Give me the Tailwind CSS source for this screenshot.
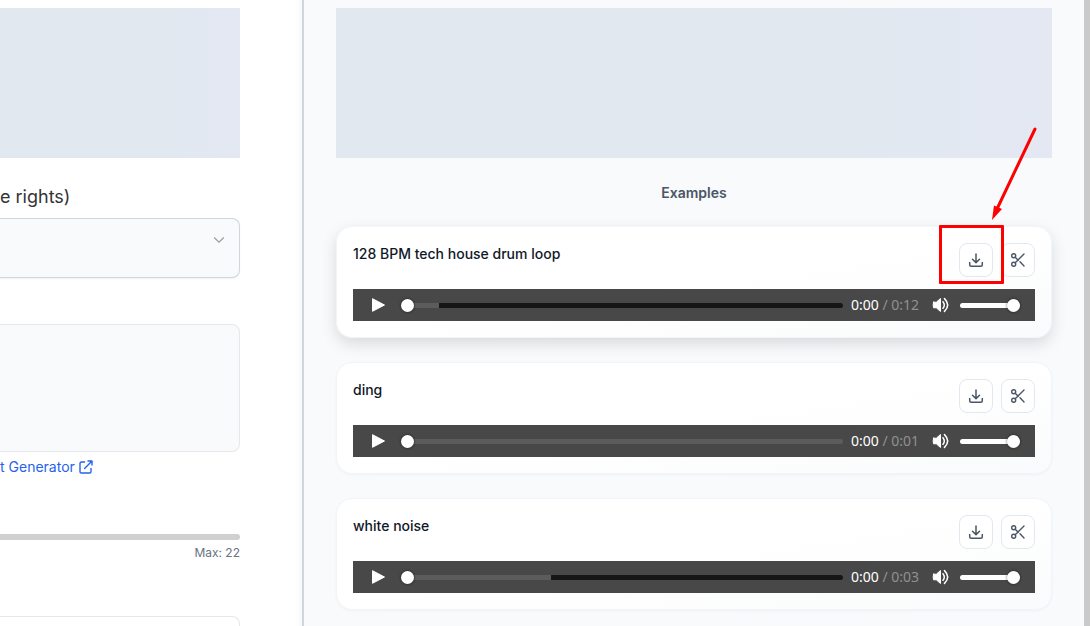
<!DOCTYPE html>
<html lang="en">

<head>
    <meta charset="UTF-8">
    <meta name="viewport" content="width=device-width, initial-scale=1.0">
    <title>Sound Generator</title>
    <script src="https://cdn.jsdelivr.net/npm/@tailwindcss/browser@4"></script>
</head>

<body class="flex h-screen overflow-hidden bg-white font-['Inter',sans-serif] text-sm text-gray-900">

    <!-- Settings -->
    <section class="w-[302px] shrink-0 pt-2 pr-[62px] shadow-[inset_-10px_0_8px_-10px_rgba(0,0,0,0.06)]">
        <div class="h-[150px] bg-linear-to-r from-[#e1e8ef] from-50% to-[#e3e8f2]"></div>

        <label for="model" class="mt-[25px] block text-lg leading-7 text-[#333]">e rights)</label>
        <div class="relative mt-[7px]">
            <select id="model" class="block h-[60px] w-full appearance-none rounded-r-lg border border-l-0 border-gray-300 bg-[#f9fafc] shadow-xs">
                <option></option>
            </select>
            <svg class="pointer-events-none absolute top-4 right-[15px] size-3" viewBox="0 0 12 12" fill="none" stroke="#999" stroke-width="1.1">
                <path d="M1.2 3.5 6 8.2l4.8-4.7" />
            </svg>
        </div>

        <textarea aria-label="Prompt" class="mt-[46px] block h-32 w-full resize-none rounded-r-lg border border-l-0 border-gray-200 bg-[#f9fafc]"></textarea>
        <a href="#" class="mt-[5px] flex items-center gap-1 leading-5 text-[#2563eb]">
            t Generator
            <svg class="size-3.5" viewBox="0 0 14 14" fill="none" stroke="currentColor" stroke-width="1.4" stroke-linecap="round" stroke-linejoin="round">
                <path d="M5.6 2H2.3A1.3 1.3 0 0 0 1 3.3v8.4A1.3 1.3 0 0 0 2.3 13h8.4a1.3 1.3 0 0 0 1.3-1.3V8.4M9 1h4v4M13 1 5.6 8.4" />
            </svg>
        </a>

        <input type="range" id="duration" min="0" max="22" value="0" class="mt-[57px] block h-1.5 w-full appearance-none rounded-r-full bg-[#d0d0d0] [&::-webkit-slider-thumb]:appearance-none">
        <label for="duration" class="mt-1 block text-right text-[12px] leading-[18px] text-gray-500">Max: 22</label>

        <input type="text" aria-label="Name" class="mt-[54px] block h-10 w-full rounded-r-lg border border-l-0 border-gray-200">
    </section>

    <!-- Results -->
    <main class="min-w-0 flex-1 overflow-hidden border-l-2 border-gray-300 bg-[#f9fafc] px-8 pt-2">
        <div class="h-[150px] bg-linear-to-r from-[#e1e8ef] from-50% to-[#e3e8f2]"></div>
        <h2 class="mt-[25px] text-center leading-5 font-semibold text-gray-600">Examples</h2>
        <div id="examples" class="mt-[23px] flex flex-col gap-6"></div>
    </main>

    <div class="w-1.5 shrink-0 bg-[#cacaca]"></div>

    <template id="annotation">
        <div class="pointer-events-none absolute -top-[18px] -left-5 h-[59px] w-[65px] rounded-[1px] border-3 border-[#f00]"></div>
        <svg class="pointer-events-none absolute -top-[118px] left-8 h-[98px] w-[46px]" viewBox="0 0 46 98" fill="#f00">
            <path d="M44 4 6 84" stroke="#f00" stroke-width="3" stroke-linecap="round" />
            <path d="M1 95 3 80.500 11 84Z" />
        </svg>
    </template>

    <script>
        const examples = [
            { title: "128 BPM tech house drum loop", length: "0:12", loaded: 8.6, marked: true },
            { title: "ding", length: "0:01", loaded: 100 },
            { title: "white noise", length: "0:03", loaded: 34 }
        ];

        const button = "flex size-[34px] items-center justify-center rounded-lg border border-slate-200 bg-white text-gray-600";
        const range = "block h-[5px] appearance-none rounded-full [&::-webkit-slider-thumb]:size-[13px] [&::-webkit-slider-thumb]:appearance-none [&::-webkit-slider-thumb]:rounded-full [&::-webkit-slider-thumb]:bg-white [&::-webkit-slider-thumb]:shadow-[0_0_3px_rgba(0,0,0,0.6)]";

        examples.forEach(item => {
            const card = document.createElement("article");
            const shadow = item.marked ? "shadow-[0_6px_16px_rgba(0,0,0,0.13)]" : "shadow-[0_1px_3px_rgba(0,0,0,0.04)]";
            card.className = `rounded-2xl border border-slate-100 bg-linear-to-br from-white from-50% to-[#fafbfc] p-4 ${shadow}`;
            card.innerHTML = `
                <div class="flex justify-between">
                    <h3 class="leading-[22px] font-medium">${item.title}</h3>
                    <div class="flex gap-2">
                        <div class="relative">
                            <button type="button" aria-label="Download" class="${button}">
                                <svg class="size-4" viewBox="0 0 16 16" fill="none" stroke="currentColor" stroke-width="1.5" stroke-linecap="round" stroke-linejoin="round">
                                    <path d="M8 2v8.500M4.500 7.200 8 10.600l3.500-3.400M1.700 10.500v2.200c0 .9.600 1.500 1.500 1.500h9.600c.9 0 1.500-.6 1.500-1.500v-2.200" />
                                </svg>
                            </button>
                            ${item.marked ? document.getElementById("annotation").innerHTML : ""}
                        </div>
                        <button type="button" aria-label="Trim" class="${button}">
                            <svg class="size-4" viewBox="0 0 16 16" fill="none" stroke="currentColor" stroke-width="1.400" stroke-linecap="round">
                                <circle cx="3.700" cy="3.800" r="2" />
                                <circle cx="3.700" cy="12.200" r="2" />
                                <path d="M14 2 5.200 10.700M5.200 5.300l3 2.900M10 9.800l4 4.200" />
                            </svg>
                        </button>
                    </div>
                </div>
                <div class="mt-3 flex h-8 items-center bg-[#484848] pr-[15px] pl-[19px]">
                    <button type="button" aria-label="Play" class="mr-4">
                        <svg class="h-[14px] w-[13px]" viewBox="0 0 13 14" fill="#fff" stroke="#fff" stroke-linejoin="round">
                            <path d="M.5.7v12.600L12.500 7Z" />
                        </svg>
                    </button>
                    <input type="range" aria-label="Seek" value="0" class="${range} min-w-0 flex-1"
                        style="background: linear-gradient(to right, #5c5c5c ${item.loaded}%, #161616 ${item.loaded}%)">
                    <span class="ml-2 w-[66px] font-['Noto_Sans',sans-serif] text-[14px] leading-5 whitespace-nowrap text-[#909090]"><span class="text-white">0:00</span> / ${item.length}</span>
                    <button type="button" aria-label="Mute" class="mr-[11px] ml-[15px]">
                        <svg class="h-4 w-[17px]" viewBox="0 0 17 16" fill="none" stroke="#fff" stroke-linecap="round">
                            <path d="M1.500 5.200h2.800L8.500 1.500v13L4.300 10.800H1.500Q.8 8 1.500 5.200Z" fill="#fff" stroke-linejoin="round" />
                            <path d="M11 4.700q2.600 3.300 0 6.600" stroke-width="1.500" />
                            <path d="M12.500 1.600q6.400 6.400 0 12.800" stroke-width="1.500" />
                        </svg>
                    </button>
                    <input type="range" aria-label="Volume" value="100" class="${range} w-[60px] bg-white">
                </div>`;
            document.getElementById("examples").appendChild(card);
        });
    </script>

</body>

</html>
